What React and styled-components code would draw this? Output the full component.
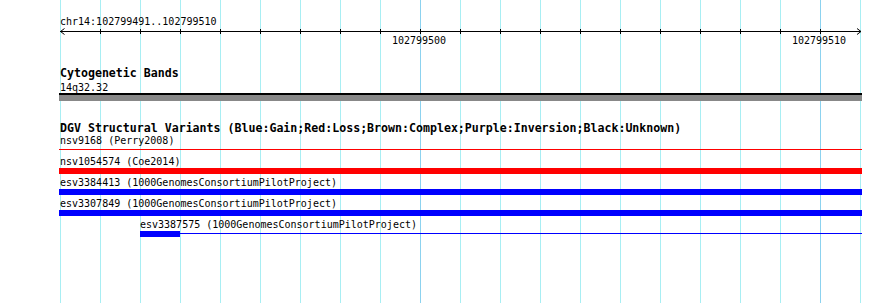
import styled, { createGlobalStyle } from 'styled-components';

const VIEW_START = 102799491;
const PX_PER_BP = 40;
const TRACK_WIDTH = 803;

// genome position -> x inside the track panel (panel starts at page x 59)
const toPx = (pos) => Math.min(TRACK_WIDTH, Math.max(0, 1 + (pos - VIEW_START) * PX_PER_BP));

const ticks = [102799500, 102799510];

const variants = [
    { id: 'nsv9168', source: 'Perry2008', color: '#ff0000', parts: [{ from: 102799400, to: 102799600, thin: true }] },
    { id: 'nsv1054574', source: 'Coe2014', color: '#ff0000', parts: [{ from: 102799400, to: 102799600 }] },
    { id: 'esv3384413', source: '1000GenomesConsortiumPilotProject', color: '#0000ff', parts: [{ from: 102799400, to: 102799600 }] },
    { id: 'esv3307849', source: '1000GenomesConsortiumPilotProject', color: '#0000ff', parts: [{ from: 102799400, to: 102799600 }] },
    {
        id: 'esv3387575',
        source: '1000GenomesConsortiumPilotProject',
        color: '#0000ff',
        parts: [
            { from: 102799493, to: 102799494 },
            { from: 102799494, to: 102799600, thin: true },
        ],
    },
];

const App = () => {
    return (
        <Page>
            <GlobalStyle />
            <Panel>
                <Ruler>
                    <RulerLabel>chr14:102799491..102799510</RulerLabel>
                    <Axis width={TRACK_WIDTH} height="6">
                        <line x1="1" y1="3.5" x2="802" y2="3.5" stroke="#000" />
                        {Array.from({ length: 19 }, (_, i) => (
                            <line key={i} x1={41.5 + i * 40} y1="1" x2={41.5 + i * 40} y2="6" stroke="#000" />
                        ))}
                        <polyline points="64.5,0.5 60.5,3.5 64.5,6.5" transform="translate(-59 0)" fill="none" stroke="#000" />
                        <polyline points="798,0.5 802,3.5 798,6.5" fill="none" stroke="#000" />
                    </Axis>
                    <TickLabels>
                        {ticks.map((t) => (
                            <TickLabel key={t} $x={toPx(t) - 1}>{t}</TickLabel>
                        ))}
                    </TickLabels>
                </Ruler>

                <Track $gap={18}>
                    <TrackTitle>Cytogenetic Bands</TrackTitle>
                    <FeatureLabel $h={16} $lh={21} $x={1}>14q32.32</FeatureLabel>
                    <Band />
                </Track>

                <Track $gap={19}>
                    <TrackTitle>DGV Structural Variants (Blue:Gain;Red:Loss;Brown:Complex;Purple:Inversion;Black:Unknown)</TrackTitle>
                    {variants.map((v) => {
                        const start = toPx(v.parts[0].from);
                        return (
                            <FeatureRow key={v.id}>
                                <FeatureLabel $h={15} $lh={17} $x={Math.max(start, 1)}>
                                    {v.id} ({v.source})
                                </FeatureLabel>
                                <Glyph style={{ marginLeft: start }}>
                                    {v.parts.map((p, i) => (
                                        <Segment
                                            key={i}
                                            $thin={p.thin}
                                            $color={v.color}
                                            style={{ width: toPx(p.to) - toPx(p.from) }}
                                        />
                                    ))}
                                </Glyph>
                            </FeatureRow>
                        );
                    })}
                </Track>
            </Panel>
        </Page>
    );
};
export default App;

const GlobalStyle = createGlobalStyle`
    html, body {
        margin: 0;
        padding: 0;
        background: #fff;
    }
    body {
        font-family: "DejaVu Sans Mono", "Liberation Mono", monospace;
        color: #000;
    }
`;

const Page = styled.div`
    width: 890px;
    height: 303px;
    overflow: hidden;
    background: #fff;
`;

const Panel = styled.div`
    margin-left: 59px;
    width: ${TRACK_WIDTH}px;
    height: 303px;
    background-image:
        repeating-linear-gradient(to right, transparent 0 361px, #8cd2ef 361px 362px, transparent 362px 400px),
        repeating-linear-gradient(to right, transparent 0 1px, #a8eef3 1px 2px, transparent 2px 40px);
`;

const Ruler = styled.div`
    padding-top: 15px;
`;

const RulerLabel = styled.div`
    height: 13px;
    padding-left: 1px;
    font-size: 10px;
    line-height: 13px;
    white-space: nowrap;
`;

const Axis = styled.svg`
    display: block;
    overflow: visible;
`;

const TickLabels = styled.div`
    position: relative;
    height: 13px;
    font-size: 10px;
    line-height: 13px;
`;

const TickLabel = styled.span`
    position: absolute;
    top: 0;
    left: ${(p) => p.$x}px;
    transform: translateX(-50%);
    white-space: nowrap;
`;

const Track = styled.section`
    margin-top: ${(p) => p.$gap}px;
`;

const TrackTitle = styled.h2`
    margin: 0;
    height: 12px;
    padding-left: 1px;
    font-size: 11.6px;
    font-weight: bold;
    line-height: 16px;
    white-space: nowrap;
`;

const FeatureRow = styled.div`
    height: 21px;
`;

const FeatureLabel = styled.div`
    height: ${(p) => p.$h}px;
    padding-left: ${(p) => p.$x}px;
    font-size: 10px;
    line-height: ${(p) => p.$lh}px;
    white-space: nowrap;
`;

const Band = styled.div`
    height: 6px;
    border-top: 2px solid #000;
    background: #888;
`;

const Glyph = styled.div`
    display: flex;
    align-items: flex-start;
    height: 6px;
`;

const Segment = styled.div`
    flex: none;
    height: ${(p) => (p.$thin ? 1 : 6)}px;
    margin-top: ${(p) => (p.$thin ? 2 : 0)}px;
    background: ${(p) => p.$color};
`;
